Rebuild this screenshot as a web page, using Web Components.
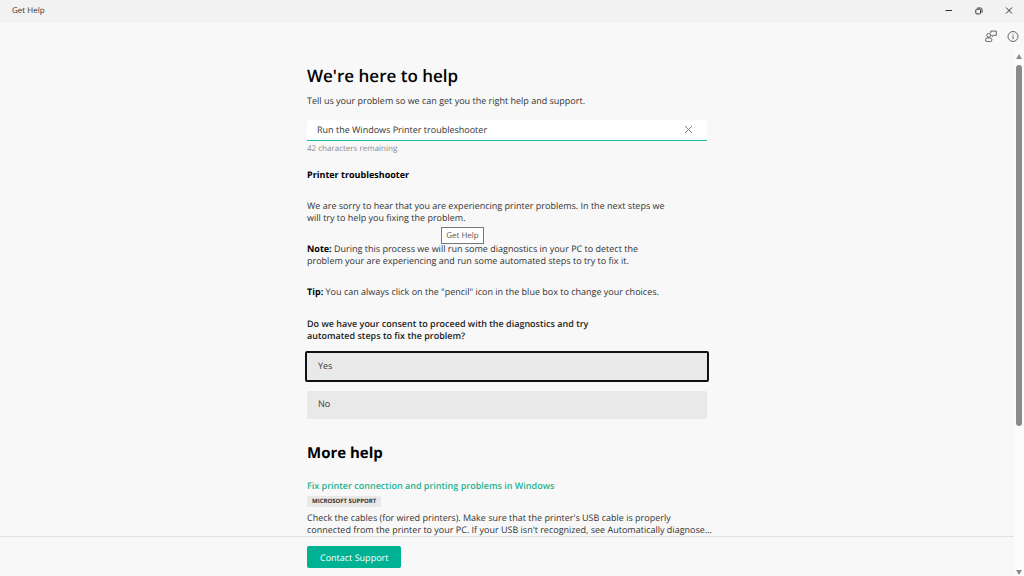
<!DOCTYPE html>
<html lang="en">
<head>
<meta charset="utf-8">
<title>Get Help</title>
<style>
  body { margin: 0; background: #f8f8f8; color: #333; font: 9px/12px "Open Sans", "Noto Sans", sans-serif; text-rendering: geometricPrecision; }
</style>
</head>
<body>
<help-window>
  <title-bar slot="title">Get Help</title-bar>
  <tool-bar slot="tools"></tool-bar>
  <help-search></help-search>
  <help-article></help-article>
  <more-help></more-help>
  <contact-bar slot="footer">Contact Support</contact-bar>
  <scroll-rail slot="rail"></scroll-rail>
</help-window>
<script>
const define = (name, html) => customElements.define(name, class extends HTMLElement {
  constructor() {
    super();
    this.attachShadow({ mode: "open" }).innerHTML = html;
  }
});

define("help-window", `
<style>
  :host { display: grid; height: 100vh; grid-template: auto auto minmax(0, 1fr) auto / minmax(0, 1fr) auto; }
  .title, .tools { grid-column: 1 / -1; }
  main { overflow-y: auto; scrollbar-width: none; }
  .column { position: relative; max-width: 400px; margin: 0 auto; padding-top: 14px; }
  .rail { grid-area: 3 / 2 / 5 / 3; display: grid; }
</style>
<div class="title"><slot name="title"></slot></div>
<div class="tools"><slot name="tools"></slot></div>
<main><div class="column"><slot></slot></div></main>
<div class="rail"><slot name="rail"></slot></div>
<div class="footer"><slot name="footer"></slot></div>`);

define("title-bar", `
<style>
  :host { display: flex; align-items: center; justify-content: space-between; height: 21px; padding-left: 12px; background: #f2f2f2; border-bottom: 1px solid #ececec; font-size: 8px; color: #333; }
  span { padding-top: 1px; }
  nav { display: flex; }
  button { display: grid; place-items: center; width: 30px; height: 21px; border: 0; padding: 0; background: none; color: #333; }
  svg { width: 8px; height: 8px; fill: none; stroke: currentColor; }
</style>
<span><slot></slot></span>
<nav>
  <button aria-label="Minimize"><svg viewBox="0 0 8 8"><path d="M.5 3.500h6.500"/></svg></button>
  <button aria-label="Restore"><svg viewBox="0 0 8 8"><rect x=".8" y="2.200" width="4.700" height="4.700" rx="1"/><path d="M2.300 1h3.200q1.500 0 1.500 1.500v3.200"/></svg></button>
  <button aria-label="Close"><svg viewBox="0 0 8 8"><path d="M1 .5l6 6M7 .5l-6 6"/></svg></button>
</nav>`);

define("tool-bar", `
<style>
  :host { display: flex; justify-content: flex-end; align-items: center; gap: 10px; height: 28px; padding-right: 5px; }
  button { display: grid; border: 0; padding: 0; background: none; color: #555; }
  svg { width: 12px; height: 12px; fill: none; stroke: currentColor; stroke-width: .9; }
</style>
<button aria-label="Feedback"><svg viewBox="0 0 12 12"><circle cx="3.700" cy="5.300" r="1.900"/><rect x=".5" y="8" width="6.400" height="3.600" rx="1.700"/><path d="M5.800 3.200V1.100h5.500v4.200H8.600L7.100 6.700V5.300h-.6" stroke-linejoin="round"/></svg></button>
<button aria-label="About"><svg viewBox="0 0 12 12"><circle cx="6" cy="6.500" r="5"/><path d="M6 5.700v3.500M6 3.700v1"/></svg></button>`);

define("help-search", `
<style>
  :host { display: block; }
  h1 { margin: 0; font-size: 17px; line-height: 24px; font-weight: 600; color: #000; }
  label { display: block; margin: 7px 0 13px; }
  .field { display: flex; align-items: center; height: 20px; background: #fff; border-bottom: 1px solid #1fbf9f; border-radius: 2px 2px 0 0; }
  input { flex: 1; min-width: 0; border: 0; outline: 0; padding: 0 10px; background: none; font: inherit; color: inherit; text-rendering: inherit; }
  button { display: grid; border: 0; padding: 0 0 2px; margin-right: 14px; background: none; color: #777; }
  svg { width: 9px; height: 9px; fill: none; stroke: currentColor; stroke-width: .9; }
  small { display: block; margin-top: 2px; font-size: 8px; color: #8b8b8b; }
</style>
<h1>We're here to help</h1>
<label for="problem">Tell us your problem so we can get you the right help and support.</label>
<div class="field">
  <input id="problem" type="text" value="Run the Windows Printer troubleshooter">
  <button aria-label="Clear"><svg viewBox="0 0 9 9"><path d="M1 1l7 7M8 1l-7 7"/></svg></button>
</div>
<small>42 characters remaining</small>`);

define("help-article", `
<style>
  :host { display: block; margin-top: 14px; }
  h2 { margin: 0; font-size: 9px; line-height: 12px; font-weight: 700; color: #000; }
  p { margin: 19px 0 0; }
  b { color: #000; }
  p + p.ask { margin-top: 20px; font-weight: 600; color: #222; }
  .options { display: grid; gap: 9px; margin-top: 9px; }
</style>
<h2>Printer troubleshooter</h2>
<p>We are sorry to hear that you are experiencing printer problems. In the next steps we<br>will try to help you fixing the problem.</p>
<p><b>Note:</b> During this process we will run some diagnostics in your PC to detect the<br>problem your are experiencing and run some automated steps to try to fix it.</p>
<p><b>Tip:</b> You can always click on the "pencil" icon in the blue box to change your choices.</p>
<p class="ask">Do we have your consent to proceed with the diagnostics and try<br>automated steps to fix the problem?</p>
<div class="options">
  <choice-button current>Yes</choice-button>
  <choice-button>No</choice-button>
</div>
<hover-tip>Get Help</hover-tip>`);

define("choice-button", `
<style>
  :host { display: grid; }
  button { height: 28px; border: 0; border-radius: 2px; padding: 0 11px 2px; background: #e9e9e9; font: inherit; color: inherit; text-align: left; text-rendering: inherit; }
  :host([current]) { margin: 0 -2px; }
  :host([current]) button { height: 31px; border: 2px solid #111; }
</style>
<button><slot></slot></button>`);

define("hover-tip", `
<style>
  :host { position: absolute; left: 134px; top: 177px; box-sizing: border-box; width: 43px; height: 17px; border: 1px solid #777; background: #fff; font-size: 8px; line-height: 16px; text-align: center; color: #555; }
</style>
<slot></slot>`);

define("more-help", `
<style>
  :host { display: block; margin-top: 22px; }
  h2 { margin: 0; font-size: 15px; line-height: 24px; font-weight: 700; color: #000; }
  a { display: block; margin-top: 15px; font-weight: 600; color: #1db191; text-decoration: none; }
  .tag { display: block; width: fit-content; margin-top: 4px; padding: 0 5px; border-radius: 2px; background: #e9e9e9; font-size: 6px; line-height: 11px; font-weight: 700; color: #333; }
  p { margin: 5px 0 0; white-space: nowrap; }
</style>
<h2>More help</h2>
<a href="#printer">Fix printer connection and printing problems in Windows</a>
<span class="tag">MICROSOFT SUPPORT</span>
<p>Check the cables (for wired printers). Make sure that the printer's USB cable is properly<br>connected from the printer to your PC. If your USB isn't recognized, see Automatically diagnose...</p>`);

define("contact-bar", `
<style>
  :host { display: block; border-top: 1px solid #e2e2e2; padding: 9px 0 8px; }
  div { max-width: 400px; margin: 0 auto; display: flex; }
  button { height: 22px; border: 0; border-radius: 2px; padding: 1px 13px 0; background: #00b294; color: #fff; font: inherit; text-rendering: inherit; }
</style>
<div><button><slot></slot></button></div>`);

define("scroll-rail", `
<style>
  :host { display: flex; flex-direction: column; align-items: center; justify-content: space-between; width: 10px; background: #fcfcfc; padding: 4px 0 1px; box-sizing: border-box; color: #8a8a8a; }
  svg { width: 6px; height: 5px; fill: currentColor; }
  .track { flex: 1; width: 6px; margin: 6px 0 4px; }
  .thumb { width: 6px; height: 72%; border-radius: 3px; background: currentColor; }
</style>
<svg viewBox="0 0 6 5"><path d="M3 0l3 5H0z"/></svg>
<div class="track"><div class="thumb"></div></div>
<svg viewBox="0 0 6 5"><path d="M0 0h6L3 5z"/></svg>`);
</script>
</body>
</html>
